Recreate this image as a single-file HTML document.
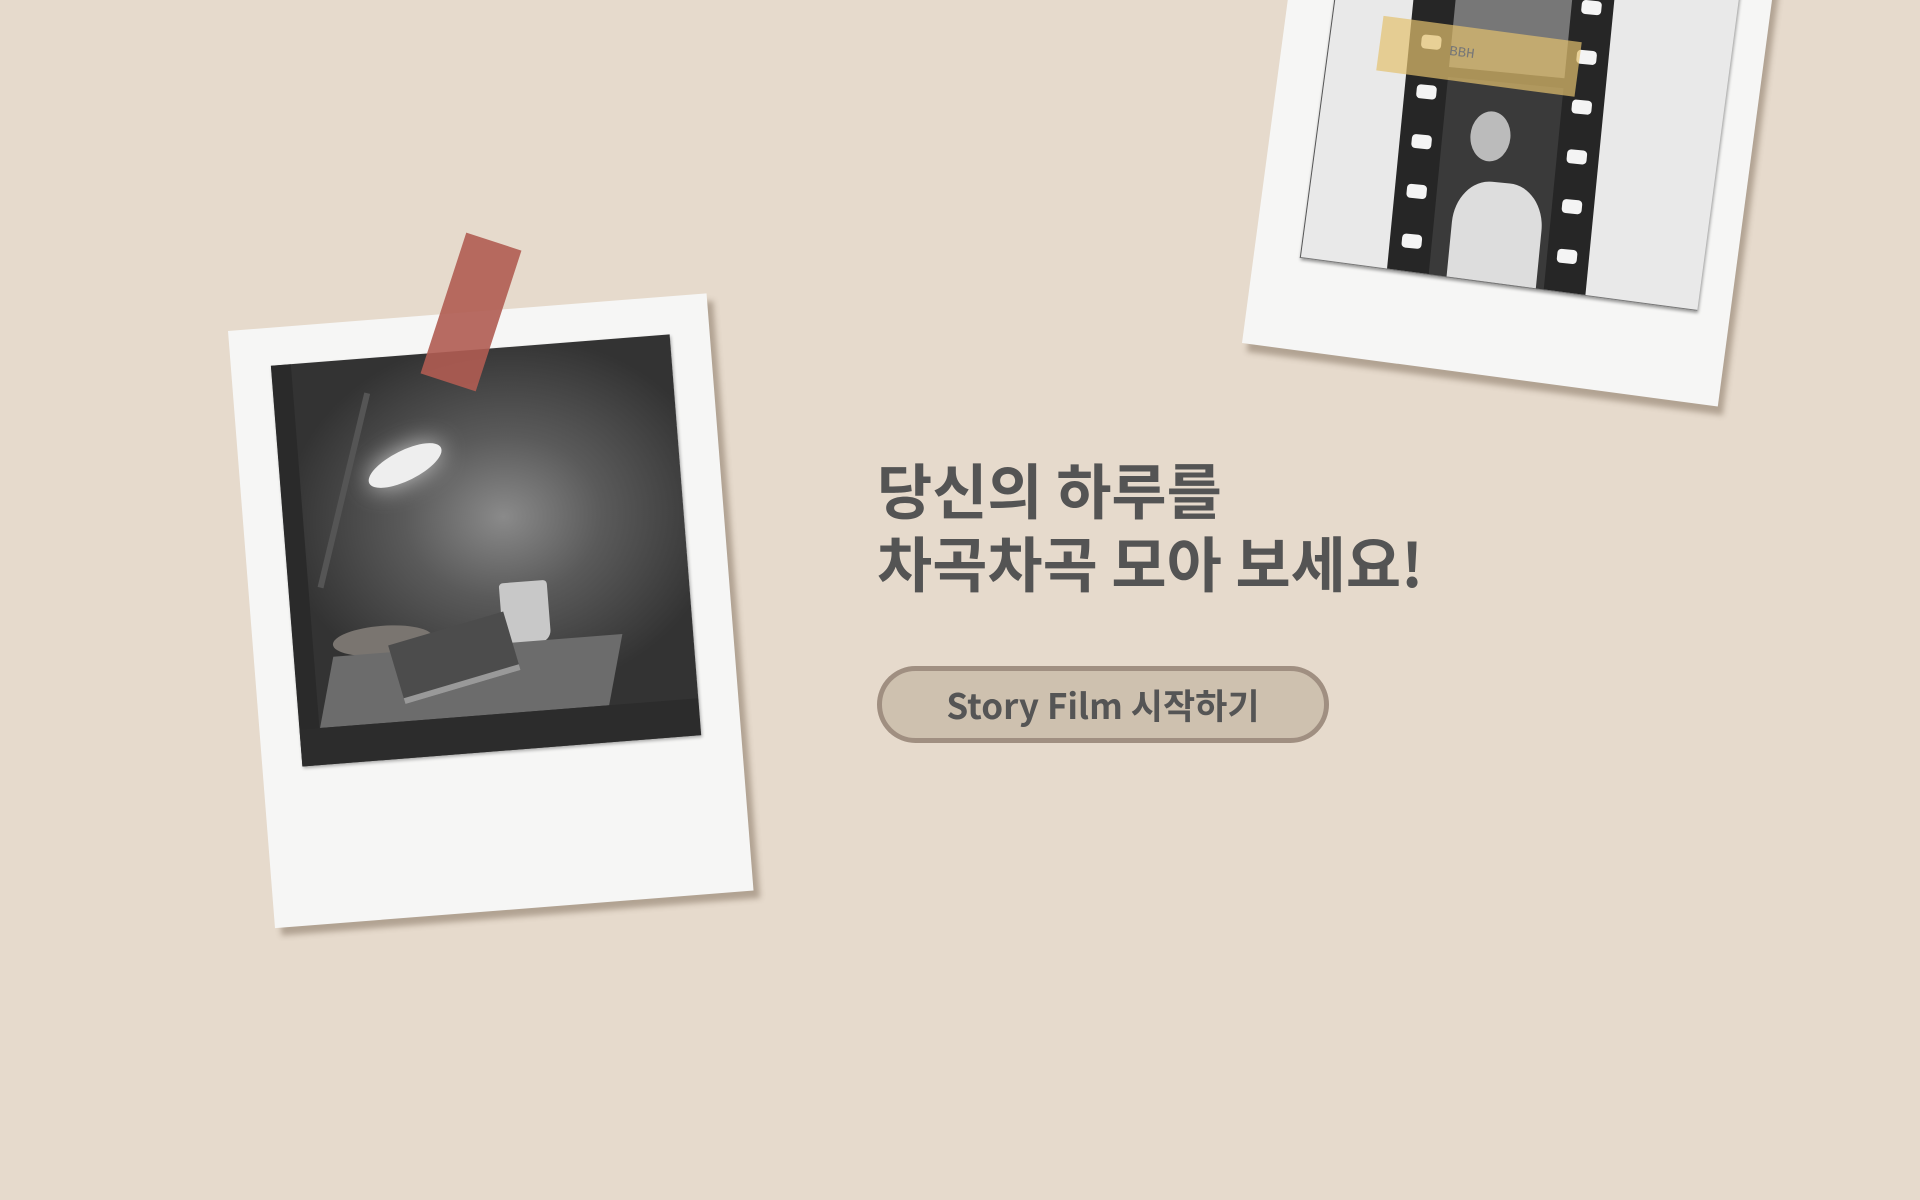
<!DOCTYPE html>
<html><head><meta charset="utf-8"><style>
html,body{margin:0;padding:0}
body{width:1920px;height:1200px;background:#e6dacc;position:relative;overflow:hidden;font-family:"Liberation Sans","Noto Sans CJK KR",sans-serif}
.pol{position:absolute;width:480px;height:599px;background:#f6f6f5;box-shadow:6px 8px 6px rgba(80,60,40,.35)}
.p1{left:228px;top:331px;transform-origin:0 0;transform:rotate(-4.5deg)}
.p2{left:1242px;top:-256px;transform-origin:0 100%;transform:rotate(7.6deg)}
.ph{position:absolute;overflow:hidden}
.p1 .ph{left:40px;top:38px;width:400px;height:402px;background:radial-gradient(ellipse 55% 45% at 55% 42%,#8a8a8a 0%,#5a5a5a 45%,#333 100%);box-shadow:1px 2px 3px rgba(0,0,0,.3)}
.p2 .ph{left:46px;top:106px;width:400px;height:400px;background:#e9e9e9;box-shadow:1px 2px 3px rgba(0,0,0,.4);border-left:1px solid #555;border-bottom:1px solid #777}
h1{position:absolute;left:877px;top:452px;margin:0;font-size:60px;line-height:73px;font-weight:bold;color:#545454;font-family:"Noto Sans CJK KR","Liberation Sans",sans-serif;letter-spacing:0}
.btn{position:absolute;left:877px;top:666px;width:442px;height:67px;border:5px solid #a08f81;border-radius:40px;background:#cec1af;color:#555;font-weight:bold;font-size:35px;text-align:center;line-height:67px;font-family:"Noto Sans CJK KR","Liberation Sans",sans-serif}
.tape{position:absolute;left:442px;top:238px;width:58px;height:148px;background:rgba(176,92,82,.9);transform:rotate(18deg)}
.hole{position:absolute;width:20px;height:14px;background:#f4f4f4;border-radius:4px}
</style></head><body>
<div class="pol p1"><div class="ph">
<div style="position:absolute;left:0;top:0;width:20px;height:402px;background:#2a2a2a"></div>
<div style="position:absolute;left:86px;top:95px;width:80px;height:30px;background:#eee;border-radius:50%;transform:rotate(-22deg);box-shadow:0 0 25px #ccc"></div>
<div style="position:absolute;left:60px;top:30px;width:6px;height:200px;background:#555;transform:rotate(18deg)"></div>
<div style="position:absolute;left:40px;top:268px;width:100px;height:30px;background:#7a7570;border-radius:50%"></div>
<div style="position:absolute;left:210px;top:235px;width:48px;height:62px;background:#c8c8c8;border-radius:4px 4px 12px 12px"></div>
<div style="position:absolute;left:30px;top:295px;width:290px;height:70px;background:#6c6c6c;transform:skewX(-15deg)"></div>
<div style="position:absolute;left:100px;top:275px;width:120px;height:55px;background:#4c4c4c;transform:rotate(-12deg);border-bottom:6px solid #999"></div>
<div style="position:absolute;left:0;top:365px;width:400px;height:40px;background:#2c2c2c"></div>
</div></div>
<div class="tape"></div>
<div class="pol p2"><div class="ph">
<div style="position:absolute;left:80px;top:-20px;width:200px;height:440px;background:#262626;transform:rotate(-2deg)">
<div style="position:absolute;left:42px;top:0;width:116px;height:210px;background:#777"></div>
<div style="position:absolute;left:42px;top:220px;width:116px;height:210px;background:#3a3a3a"></div>
<div style="position:absolute;left:60px;top:320px;width:90px;height:110px;background:#ddd;border-radius:40% 40% 0 0"></div>
<div style="position:absolute;left:70px;top:250px;width:40px;height:50px;background:#bbb;border-radius:50%"></div>
<div class="hole" style="left:12px;top:30px"></div><div class="hole" style="left:12px;top:80px"></div><div class="hole" style="left:12px;top:130px"></div><div class="hole" style="left:12px;top:180px"></div><div class="hole" style="left:12px;top:230px"></div><div class="hole" style="left:12px;top:280px"></div><div class="hole" style="left:12px;top:330px"></div><div class="hole" style="left:12px;top:380px"></div>
<div class="hole" style="left:168px;top:30px"></div><div class="hole" style="left:168px;top:80px"></div><div class="hole" style="left:168px;top:130px"></div><div class="hole" style="left:168px;top:180px"></div><div class="hole" style="left:168px;top:230px"></div><div class="hole" style="left:168px;top:280px"></div><div class="hole" style="left:168px;top:330px"></div><div class="hole" style="left:168px;top:380px"></div>
</div>
<div style="position:absolute;left:50px;top:150px;width:200px;height:55px;background:rgba(226,192,110,.7);font-family:'Liberation Mono',monospace;font-size:14px;color:#777;padding-left:70px;box-sizing:border-box;line-height:55px">BBH</div>
</div></div>
<h1>당신의 하루를<br>차곡차곡 모아 보세요!</h1>
<div class="btn">Story Film 시작하기</div>
</body></html>
